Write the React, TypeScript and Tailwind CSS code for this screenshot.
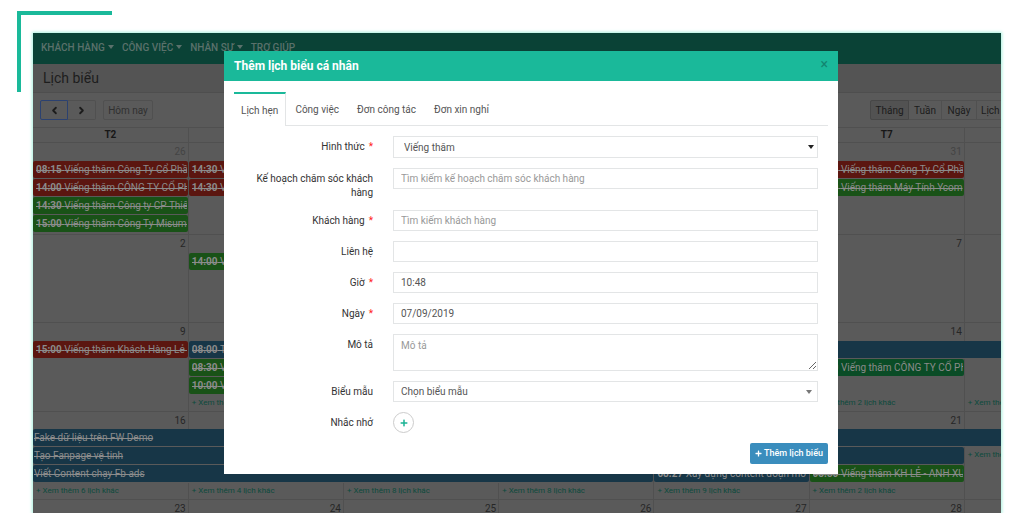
import { useState } from "react";
import { ChevronLeft, ChevronRight } from "lucide-react";
import { FaPlus } from "react-icons/fa";

// ── Calendar data ─────────────────────────────────────────────────────────────
type Tone = "red" | "green" | "emerald" | "blue";

type Cell = {
  span?: number;
  tone?: Tone;
  time?: string;
  title?: string;
  open?: boolean;
  more?: string;
};

type Week = { days: number[]; slots: Cell[][]; filler?: string };

const TONES: Record<Tone, string> = {
  red: "bg-[#5b1610]",
  green: "bg-[#195217]",
  emerald: "bg-[#0a4c26]",
  blue: "bg-[#173647]",
};

const WEEKDAYS = ["T2", "T3", "T4", "T5", "T6", "T7", "CN"];

const WEEKS: Week[] = [
  {
    days: [26, 27, 28, 29, 30, 31, 1],
    filler: "h-[2px]",
    slots: [
      [
        { tone: "red", time: "08:15", title: "Viếng thăm Công Ty Cổ Phần" },
        { tone: "red", time: "14:30", title: "Viếng thăm" },
        { span: 3 },
        { tone: "red", time: "08:30", title: "Viếng thăm Công Ty Cổ Phần" },
        {},
      ],
      [
        { tone: "red", time: "14:00", title: "Viếng thăm CÔNG TY CỔ PHẦN" },
        { tone: "red", time: "14:30", title: "Viếng thăm" },
        { span: 3 },
        { tone: "green", time: "09:00", title: "Viếng thăm Máy Tính Ycom" },
        {},
      ],
      [{ tone: "green", time: "14:30", title: "Viếng thăm Công ty CP Thiết bị" }, {}, { span: 3 }, {}, {}],
      [{ tone: "green", time: "15:00", title: "Viếng thăm Công Ty Misumi" }, {}, { span: 3 }, {}, {}],
    ],
  },
  {
    days: [2, 3, 4, 5, 6, 7, 8],
    filler: "h-[52px]",
    slots: [[{}, { tone: "green", time: "14:00", title: "Viếng thăm" }, { span: 3 }, {}, {}]],
  },
  {
    days: [9, 10, 11, 12, 13, 14, 15],
    slots: [
      [
        { tone: "red", time: "15:00", title: "Viếng thăm Khách Hàng Lẻ - Anh" },
        { span: 6, tone: "blue", time: "08:00", title: "Tham gia" },
      ],
      [
        {},
        { tone: "green", time: "08:30", title: "Viếng thăm" },
        { span: 3 },
        { tone: "emerald", time: "08:30", title: "Viếng thăm CÔNG TY CỔ PHẦN", open: true },
        {},
      ],
      [{}, { tone: "green", time: "10:00", title: "Viếng thăm" }, { span: 3 }, {}, {}],
      [
        {},
        { more: "+ Xem thêm 2 lịch khác" },
        { span: 3 },
        { more: "+ Xem thêm 2 lịch khác" },
        { more: "+ Xem thêm 2 lịch khác" },
      ],
    ],
  },
  {
    days: [16, 17, 18, 19, 20, 21, 22],
    slots: [
      [{ span: 7, tone: "blue", title: "Fake dữ liệu trên FW Demo" }],
      [{ span: 6, tone: "blue", title: "Tạo Fanpage vệ tinh" }, { more: "+ Xem thêm 2 lịch khác" }],
      [
        { span: 4, tone: "blue", title: "Viết Content chạy Fb ads" },
        { tone: "blue", time: "08:27", title: "Xây dựng content đoạn mô tả", open: true },
        { tone: "green", time: "08:30", title: "Viếng thăm KH LẺ - ANH XUÂN" },
        {},
      ],
      [
        { more: "+ Xem thêm 6 lịch khác" },
        { more: "+ Xem thêm 4 lịch khác" },
        { more: "+ Xem thêm 8 lịch khác" },
        { more: "+ Xem thêm 8 lịch khác" },
        { more: "+ Xem thêm 9 lịch khác" },
        { more: "+ Xem thêm 2 lịch khác" },
        {},
      ],
    ],
  },
  { days: [23, 24, 25, 26, 27, 28, 29], slots: [], filler: "h-[70px]" },
];

const NAV = [
  { label: "KHÁCH HÀNG", menu: true },
  { label: "CÔNG VIỆC", menu: true },
  { label: "NHÂN SỰ", menu: true },
  { label: "TRỢ GIÚP", menu: false },
];

const TABS = ["Lịch hẹn", "Công việc", "Đơn công tác", "Đơn xin nghỉ"];

function Caret({ className }: { className: string }) {
  return (
    <svg viewBox="0 0 6 4" className={className} fill="currentColor" aria-hidden="true">
      <path d="M0 0h6L3 4z" />
    </svg>
  );
}

// ── Page behind the dialog ────────────────────────────────────────────────────
function NavBar() {
  return (
    <nav className="flex h-[31px] items-center gap-2 bg-[#0a4236] px-2 pb-[3px] text-[10px] font-medium text-[#5a716b]">
      {NAV.map(item => (
        <a key={item.label} href="#" className="flex items-center gap-[3px] whitespace-nowrap">
          {item.label}
          {item.menu && <Caret className="h-1 w-[6px]" />}
        </a>
      ))}
    </nav>
  );
}

function Toolbar() {
  return (
    <div className="flex h-[34px] items-center justify-between pl-[7px] text-[10px] text-[#1c1c1c]">
      <div className="flex h-5">
        <button aria-label="Tháng trước" className="flex w-7 items-center justify-center rounded-l-[2px] border border-[#2b4170]">
          <ChevronLeft size={11} strokeWidth={4} />
        </button>
        <button aria-label="Tháng sau" className="flex w-7 items-center justify-center rounded-r-[2px] border border-l-0 border-[#505050]">
          <ChevronRight size={11} strokeWidth={4} />
        </button>
        <button className="ml-[7px] w-[50px] rounded-[2px] border border-[#505050] text-[#303030]">Hôm nay</button>
      </div>
      <div className="flex h-5 w-[131px] overflow-hidden whitespace-nowrap">
        <button className="w-[39px] shrink-0 rounded-l-[2px] border border-[#474747] bg-[#525252]">Tháng</button>
        <button className="w-[33px] shrink-0 border-y border-r border-[#505050]">Tuần</button>
        <button className="w-[35px] shrink-0 border-y border-r border-[#505050]">Ngày</button>
        <button className="shrink-0 border-y border-[#505050] px-1">Lịch biểu</button>
      </div>
    </div>
  );
}

function EventCell({ cell }: { cell: Cell }) {
  if (cell.more) {
    return (
      <a href="#" className="block h-4 truncate pl-[3px] text-[8px] leading-4 text-[#0d4a3d]">
        {cell.more}
      </a>
    );
  }
  if (!cell.tone) return null;
  return (
    <div
      className={`h-[17px] overflow-hidden rounded-[2px] whitespace-nowrap text-[10px] leading-[17px] text-[#8b8b8b] ${TONES[cell.tone]} ${
        cell.time ? "pr-px pl-[3px]" : "px-px"
      } ${cell.open ? "" : "line-through"}`}
    >
      <div className="overflow-hidden">
        {cell.time && <span className="font-bold">{cell.time} </span>}
        {cell.title}
      </div>
    </div>
  );
}

function Calendar() {
  return (
    <table className="w-[112.3%] table-fixed border-collapse">
      <thead>
        <tr className="h-[15px] text-[10px] leading-[14px] text-[#171717]">
          {WEEKDAYS.map(day => (
            <th key={day} className="border border-l-0 border-[#505050] p-0 font-bold">
              {day}
            </th>
          ))}
        </tr>
      </thead>
      {WEEKS.map((week, w) => (
        <tbody key={w} className="border-t border-[#505050]">
          <tr className="h-[18px]">
            {week.days.map((day, i) => (
              <td
                key={i}
                className={`border-r border-[#505050] p-0 pr-[2px] text-right text-[10px] leading-[17px] ${
                  w === 0 ? "text-[#444444]" : "text-[#262626]"
                }`}
              >
                {day}
              </td>
            ))}
          </tr>
          {week.slots.map((slot, s) => (
            <tr key={s} className={s === 3 && w > 0 ? "h-4" : "h-[18px]"}>
              {slot.map((cell, c) => (
                <td key={c} colSpan={cell.span} className="border-r border-[#505050] p-0 align-top">
                  <EventCell cell={cell} />
                </td>
              ))}
            </tr>
          ))}
          {week.filler && (
            <tr className={week.filler}>
              {WEEKDAYS.map(day => (
                <td key={day} className="border-r border-[#505050] p-0" />
              ))}
            </tr>
          )}
        </tbody>
      ))}
    </table>
  );
}

// ── Dialog ────────────────────────────────────────────────────────────────────
const FIELD = "block w-full border border-[#e3e5e6] bg-white px-[7px] text-[10px] text-[#555555] outline-none placeholder:text-[#999999]";

function Row({ id, label, required, children }: { id: string; label: string; required?: boolean; children: React.ReactNode }) {
  return (
    <div className="grid grid-cols-[129px_1fr] gap-5">
      <label htmlFor={id} className="pt-1 text-right text-[10px] leading-[14px] text-[#333333]">
        {label}
        {required && <span className="ml-1 text-[#ff1a1a]">*</span>}
      </label>
      <div>{children}</div>
    </div>
  );
}

function ScheduleDialog() {
  const [tab, setTab] = useState(TABS[0]);

  return (
    <div role="dialog" aria-label="Thêm lịch biểu cá nhân" className="absolute top-[18px] right-[163px] left-[191px] bg-white">
      <header className="flex h-[30px] items-center justify-between bg-[#1ab99a] px-[10px]">
        <h2 className="text-xs font-bold text-white">Thêm lịch biểu cá nhân</h2>
        <button aria-label="Đóng" className="mb-1 text-sm leading-none text-[#128570]">
          ×
        </button>
      </header>

      <div className="px-[10px] pt-[11px] pb-[10px]">
        <div role="tablist" className="flex h-[34px] text-[10px] text-[#555555]">
          {TABS.map(name => (
            <button
              key={name}
              role="tab"
              aria-selected={tab === name}
              onClick={() => setTab(name)}
              className={
                tab === name
                  ? "border-t-2 border-r border-t-[#1ab99a] border-r-[#e3e5e6] px-[7px]"
                  : "border-t-2 border-b border-t-transparent border-b-[#e3e5e6] px-[9px]"
              }
            >
              {name}
            </button>
          ))}
          <div className="flex-1 border-b border-[#e3e5e6]" />
        </div>

        <form className="flex flex-col gap-[10px] pt-[10px]" onSubmit={e => e.preventDefault()}>
          <div className="flex flex-col gap-[10px] px-[10px]">
            <Row id="type" label="Hình thức" required>
              <div className="relative">
                <select id="type" className={`${FIELD} h-[22px] appearance-none pl-[10px]`}>
                  <option>Viếng thăm</option>
                </select>
                <Caret className="pointer-events-none absolute top-[9px] right-1 h-1 w-[6px] text-[#222222]" />
              </div>
            </Row>
            <Row id="plan" label="Kế hoạch chăm sóc khách hàng">
              <input id="plan" placeholder="Tìm kiếm kế hoạch chăm sóc khách hàng" className={`${FIELD} h-[21px]`} />
            </Row>
            <Row id="customer" label="Khách hàng" required>
              <input id="customer" placeholder="Tìm kiếm khách hàng" className={`${FIELD} h-[21px]`} />
            </Row>
            <Row id="contact" label="Liên hệ">
              <input id="contact" className={`${FIELD} h-[21px]`} />
            </Row>
            <Row id="time" label="Giờ" required>
              <input id="time" defaultValue="10:48" className={`${FIELD} h-[21px]`} />
            </Row>
            <Row id="date" label="Ngày" required>
              <input id="date" defaultValue="07/09/2019" className={`${FIELD} h-[21px]`} />
            </Row>
            <Row id="note" label="Mô tả">
              <textarea id="note" placeholder="Mô tả" className={`${FIELD} h-[37px] py-1 leading-[14px]`} />
            </Row>
            <Row id="template" label="Biểu mẫu">
              <div className="relative">
                <select id="template" className={`${FIELD} h-[21px] appearance-none`}>
                  <option>Chọn biểu mẫu</option>
                </select>
                <Caret className="pointer-events-none absolute top-[9px] right-[6px] h-1 w-[6px] text-[#777777]" />
              </div>
            </Row>
            <Row id="remind" label="Nhắc nhở">
              <button
                id="remind"
                type="button"
                className="flex size-[21px] items-center justify-center rounded-full border border-[#cccccc] text-[#1ab394]"
              >
                <FaPlus size={8} />
              </button>
            </Row>
          </div>
          <button
            type="submit"
            className="flex h-[21px] items-center gap-[2px] self-end rounded-[2px] bg-[#3a8dbd] px-[5px] text-[9px] font-medium text-white"
          >
            <FaPlus size={7} />
            Thêm lịch biểu
          </button>
        </form>
      </div>
    </div>
  );
}

export default function App() {
  return (
    <div className="relative h-screen overflow-hidden bg-white pt-[33px] pr-[23px] pl-[33px] font-[Roboto,sans-serif]">
      {/* Corner bracket around the frame */}
      <div className="absolute top-[11px] left-[17px] h-[81px] w-[95px] border-t-4 border-l-4 border-[#1ab99a]" />

      <div className="relative h-full bg-[#5a5a5a] shadow-[0_0_3px_1px_#a9f0de]">
        <div className="h-full overflow-hidden">
          <NavBar />
          <h1 className="h-[29px] border-b border-[#4e4e4e] bg-[#545454] pl-[10px] text-sm leading-[28px] text-[#1d1d1d]">
            Lịch biểu
          </h1>
          <Toolbar />
          <Calendar />
        </div>
        <ScheduleDialog />
      </div>
    </div>
  );
}
